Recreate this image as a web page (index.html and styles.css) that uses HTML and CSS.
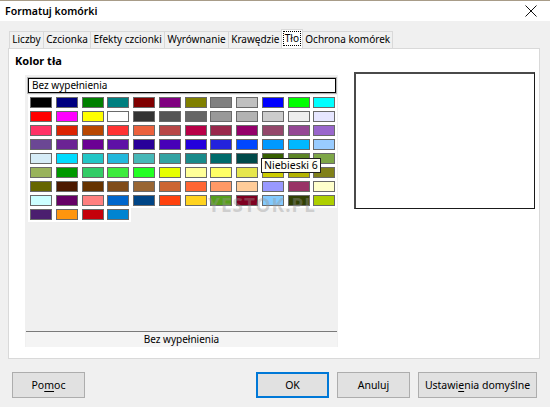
FILE: index.html
```html
<!DOCTYPE html>
<html lang="pl">
<head>
<meta charset="utf-8">
<title>Formatuj komórki</title>
<link rel="stylesheet" href="styles.css">
</head>
<body>
<div class="window">
  <div class="titlebar">
    <span class="title">Formatuj komórki</span>
    <svg class="close" width="12" height="12" viewBox="0 0 12 12"><path d="M0.5 0.5 L11.5 11.5 M11.5 0.5 L0.5 11.5" stroke="#111" stroke-width="1" fill="none"/></svg>
  </div>
  <div class="body">
    <div class="tabs">
      <div class="tab">Liczby</div>
      <div class="tab">Czcionka</div>
      <div class="tab">Efekty czcionki</div>
      <div class="tab">Wyrównanie</div>
      <div class="tab">Krawędzie</div>
      <div class="tab active"><span class="focus">Tło</span></div>
      <div class="tab">Ochrona komórek</div>
    </div>
    <div class="page">
      <div class="heading">Kolor tła</div>
      <div class="content">
        <div class="palette">
          <div class="field">Bez wypełnienia</div>
          <div class="grid">
            <span class="sw" style="background:#000000"></span><span class="sw" style="background:#000080"></span><span class="sw" style="background:#008000"></span><span class="sw" style="background:#008080"></span><span class="sw" style="background:#800000"></span><span class="sw" style="background:#800080"></span><span class="sw" style="background:#808000"></span><span class="sw" style="background:#808080"></span><span class="sw" style="background:#c0c0c0"></span><span class="sw" style="background:#0000ff"></span><span class="sw" style="background:#00ff00"></span><span class="sw" style="background:#00ffff"></span>
            <span class="sw" style="background:#ff0000"></span><span class="sw" style="background:#ff00ff"></span><span class="sw" style="background:#ffff00"></span><span class="sw" style="background:#ffffff"></span><span class="sw" style="background:#333333"></span><span class="sw" style="background:#555555"></span><span class="sw" style="background:#666666"></span><span class="sw" style="background:#999999"></span><span class="sw" style="background:#b3b3b3"></span><span class="sw" style="background:#cccccc"></span><span class="sw" style="background:#eeeeee"></span><span class="sw" style="background:#e6e6ff"></span>
            <span class="sw" style="background:#ff3366"></span><span class="sw" style="background:#dc2300"></span><span class="sw" style="background:#b84700"></span><span class="sw" style="background:#ff3333"></span><span class="sw" style="background:#eb613d"></span><span class="sw" style="background:#b84747"></span><span class="sw" style="background:#b80047"></span><span class="sw" style="background:#99284c"></span><span class="sw" style="background:#94006b"></span><span class="sw" style="background:#94476b"></span><span class="sw" style="background:#944794"></span><span class="sw" style="background:#9966cc"></span>
            <span class="sw" style="background:#6b4794"></span><span class="sw" style="background:#6b2394"></span><span class="sw" style="background:#6b0094"></span><span class="sw" style="background:#5e11a6"></span><span class="sw" style="background:#280099"></span><span class="sw" style="background:#4700b8"></span><span class="sw" style="background:#2300dc"></span><span class="sw" style="background:#2323dc"></span><span class="sw" style="background:#0047ff"></span><span class="sw" style="background:#0099ff"></span><span class="sw" style="background:#00b8ff"></span><span class="sw" style="background:#99ccff"></span>
            <span class="sw" style="background:#d6ecf7"></span><span class="sw" style="background:#00dcff"></span><span class="sw" style="background:#23c6c6"></span><span class="sw" style="background:#23b8dc"></span><span class="sw" style="background:#47b8b8"></span><span class="sw" style="background:#33a3a3"></span><span class="sw" style="background:#198a8a"></span><span class="sw" style="background:#006b6b"></span><span class="sw" style="background:#004a4a"></span><span class="sw" style="background:#355e00"></span><span class="sw" style="background:#5c8526"></span><span class="sw" style="background:#7da647"></span>
            <span class="sw" style="background:#99b35c"></span><span class="sw" style="background:#009900"></span><span class="sw" style="background:#33cc66"></span><span class="sw" style="background:#3deb3d"></span><span class="sw" style="background:#23ff23"></span><span class="sw" style="background:#e6ff00"></span><span class="sw" style="background:#ffff99"></span><span class="sw" style="background:#ffff66"></span><span class="sw" style="background:#e6e64c"></span><span class="sw" style="background:#cccc00"></span><span class="sw" style="background:#b3b300"></span><span class="sw" style="background:#808019"></span>
            <span class="sw" style="background:#666600"></span><span class="sw" style="background:#4c1900"></span><span class="sw" style="background:#663300"></span><span class="sw" style="background:#804c19"></span><span class="sw" style="background:#996633"></span><span class="sw" style="background:#cc6633"></span><span class="sw" style="background:#ff6633"></span><span class="sw" style="background:#ff9966"></span><span class="sw" style="background:#ffcc99"></span><span class="sw" style="background:#9999ff"></span><span class="sw" style="background:#993366"></span><span class="sw" style="background:#ffffcc"></span>
            <span class="sw" style="background:#ccffff"></span><span class="sw" style="background:#660066"></span><span class="sw" style="background:#ff8080"></span><span class="sw" style="background:#0066cc"></span><span class="sw" style="background:#004586"></span><span class="sw" style="background:#ff420e"></span><span class="sw" style="background:#ffd320"></span><span class="sw" style="background:#579d1c"></span><span class="sw" style="background:#7e0021"></span><span class="sw" style="background:#83caff"></span><span class="sw" style="background:#314004"></span><span class="sw" style="background:#aecf00"></span>
            <span class="sw" style="background:#4b1f6f"></span><span class="sw" style="background:#ff950e"></span><span class="sw" style="background:#c5000b"></span><span class="sw" style="background:#0084d1"></span>
            <div class="tooltip">Niebieski 6</div>
            <div class="watermark">YESTOK.PL</div>
          </div>
          <div class="spacer"></div>
          <div class="status">Bez wypełnienia</div>
        </div>
        <div class="preview"></div>
      </div>
    </div>
    <div class="buttons">
      <button class="btn">Po<u>m</u>oc</button>
      <div class="right">
        <button class="btn default">OK</button>
        <button class="btn">Anuluj</button>
        <button class="btn wide">Ustawi<u>e</u>nia domyślne</button>
      </div>
    </div>
  </div>
</div>
</body>
</html>
```

FILE: styles.css
```css
* { box-sizing: border-box; }
html, body { margin: 0; padding: 0; }
body {
  width: 550px;
  height: 407px;
  overflow: hidden;
  background: #f0f0f0;
  font-family: "Noto Sans", "Open Sans", sans-serif;
  font-size: 10px;
  color: #000;
}
.window { width: 550px; height: 407px; display: flex; flex-direction: column; }
.titlebar {
  height: 21px;
  background: #fff;
  border-top: 1px solid #a89c88;
  display: flex;
  align-items: center;
  justify-content: space-between;
  padding: 0 13px 0 5px;
}
.title { font-size: 10.5px; font-weight: 600; }
.close { display: block; }
.body { flex: 1; display: flex; flex-direction: column; }
.tabs {
  display: flex;
  align-items: flex-end;
  margin-top: 9px;
  padding-left: 9px;
  height: 18px;
  position: relative;
  z-index: 1;
}
.tab {
  height: 17px;
  line-height: 15px;
  padding: 0 2.3px;
  border: 1px solid #d9d9d9;
  border-bottom: none;
  margin-right: -1px;
  background: #f0f0f0;
  white-space: nowrap;
}
.tab.active {
  height: 19px;
  background: #fff;
  padding: 1px 1px 0;
  margin-left: -1px;
  margin-right: -1px;
  border-color: #d9d9d9;
}
.focus {
  display: inline-block;
  border: 1px dotted #000;
  line-height: 13px;
  padding: 0 1px;
}
.page {
  margin: 0 10px 0 8px;
  height: 311px;
  background: #fff;
  border: 1px solid #d9d9d9;
  padding: 5px 4px 0 6px;
}
.heading { font-size: 11px; font-weight: 700; line-height: 14px; }
.content {
  display: flex;
  align-items: flex-start;
  margin-top: 4px;
  padding-left: 10px;
  gap: 16px;
}
.palette {
  margin-top: 3px;
  width: 313px;
  height: 272px;
  background: #f0f0f0;
  padding: 3px 1px 0 3px;
  display: flex;
  flex-direction: column;
}
.field {
  height: 15px;
  background: #fff;
  border: 1px solid #000;
  box-shadow: 0 0 0 1px #b5b5b5;
  line-height: 13px;
  padding-left: 3px;
  font-size: 10px;
  margin-right: 1px;
}
.grid {
  position: relative;
  margin-top: 4px;
  margin-left: 2px;
  display: grid;
  grid-template-columns: repeat(12, 22px);
  grid-auto-rows: 11px;
  column-gap: 3.75px;
  row-gap: 3px;
}
.sw {
  display: block;
  border: 1px solid #6a6a6a;
  box-shadow: 0 0 0 2px #fff;
}
.tooltip {
  position: absolute;
  left: 231px;
  top: 61px;
  height: 15px;
  padding: 0 2px;
  background: #fffff6;
  border: 1px solid #202020;
  line-height: 13px;
  white-space: nowrap;
  font-size: 10.5px;
  z-index: 2;
}
.watermark {
  position: absolute;
  left: 178px;
  top: 95px;
  font-size: 19px;
  font-weight: 700;
  letter-spacing: 1px;
  color: rgba(150, 150, 150, 0.38);
  z-index: 1;
  white-space: nowrap;
}
.spacer { flex: 1; }
.status {
  border-top: 1px solid #7a7a7a;
  background: #f4f4f4;
  height: 16px;
  line-height: 15px;
  text-align: center;
  margin: 0 0 0 -2px;
}
.preview {
  width: 181px;
  height: 137px;
  background: #fff;
  border-top: 2px solid #4a4a4a;
  border-left: 2px solid #4a4a4a;
  border-right: 1px solid #1a1a1a;
  border-bottom: 1px solid #1a1a1a;
}
.buttons {
  display: flex;
  justify-content: space-between;
  margin-top: 13px;
  padding: 0 13px 0 12px;
}
.right { display: flex; gap: 8px; }
.btn {
  height: 26px;
  width: 73px;
  font-family: "Noto Sans", "Open Sans", sans-serif;
  font-size: 10.5px;
  color: #000;
  background: #e1e1e1;
  border: 1px solid #adadad;
  padding: 0;
}
.btn.default { border: 1px solid #0078d7; box-shadow: inset 0 0 0 1px #0078d7; }
.btn.wide { width: 119px; }
.btn u { text-decoration: underline; text-underline-offset: 2px; }
```
